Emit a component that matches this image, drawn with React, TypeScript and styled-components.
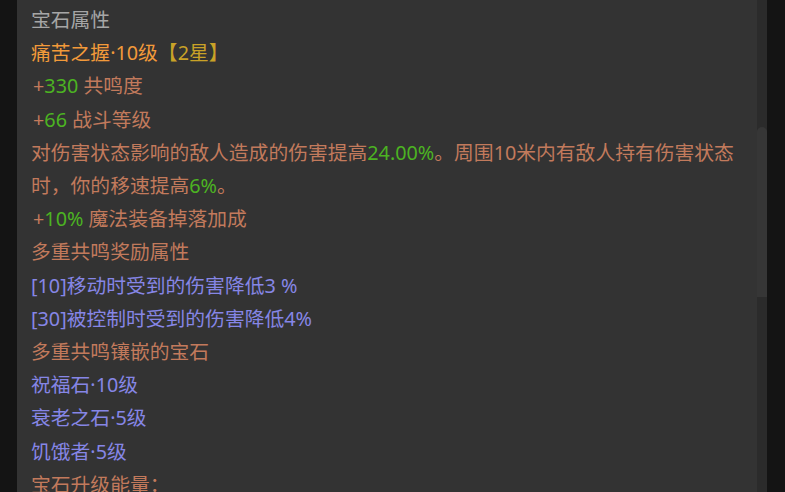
import styled, { createGlobalStyle } from "styled-components";

const GlobalStyle = createGlobalStyle`
  html, body {
    margin: 0;
    padding: 0;
    background: #141414;
    overflow: hidden;
  }
`;

const Page = styled.div`
  display: flex;
  width: 785px;
  height: 492px;
  background: #141414;
  overflow: hidden;
`;

const Gutter = styled.div<{ $w: number }>`
  flex: 0 0 ${(p) => p.$w}px;
  background: #141414;
`;

const Panel = styled.div`
  flex: 1 1 0%;
  background: #333333;
  padding: 3px 12px 0 14px;
  font-family: "Noto Sans", "Noto Sans CJK SC", sans-serif;
  font-size: 19.8px;
  line-height: 33.2px;
  overflow: hidden;
`;

const Track = styled.div`
  flex: 0 0 10px;
  background: #2b2b2b;
  padding-top: 127px;
  box-sizing: border-box;
`;

const Thumb = styled.div`
  height: 170px;
  background: #363636;
  border-radius: 5px 5px 0 0;
`;

type Tone = "gray" | "orange" | "gold" | "brown" | "green" | "blue";

const tones: Record<Tone, string> = {
  gray: "#a6a6a6",
  orange: "#f29a3a",
  gold: "#c9a227",
  brown: "#c27a5c",
  green: "#4cb322",
  blue: "#8686e6",
};

const Line = styled.div<{ $tone: Tone }>`
  color: ${(p) => tones[p.$tone]};
  white-space: normal;
`;

const Span = styled.span<{ $tone: Tone }>`
  color: ${(p) => tones[p.$tone]};
`;

const Plus = styled.span`
  padding-left: 2px;
`;

function Stat({ value, label }: { value: string; label: string }) {
  return (
    <Line $tone="brown">
      <Plus>+</Plus>
      <Span $tone="green">{value}</Span> {label}
    </Line>
  );
}

export default function App() {
  return (
    <>
      <GlobalStyle />
      <Page>
        <Gutter $w={17} />
        <Panel>
          <Line $tone="gray">宝石属性</Line>
          <Line $tone="orange">
            痛苦之握·10级<Span $tone="gold">【2星】</Span>
          </Line>
          <Stat value="330" label="共鸣度" />
          <Stat value="66" label="战斗等级" />
          <Line $tone="brown">
            对伤害状态影响的敌人造成的伤害提高<Span $tone="green">24.00%</Span>
            。周围10米内有敌人持有伤害状态时，你的移速提高
            <Span $tone="green">6%</Span>。
          </Line>
          <Stat value="10%" label="魔法装备掉落加成" />
          <Line $tone="brown">多重共鸣奖励属性</Line>
          <Line $tone="blue">[10]移动时受到的伤害降低3 %</Line>
          <Line $tone="blue">[30]被控制时受到的伤害降低4%</Line>
          <Line $tone="brown">多重共鸣镶嵌的宝石</Line>
          <Line $tone="blue">祝福石·10级</Line>
          <Line $tone="blue">衰老之石·5级</Line>
          <Line $tone="blue">饥饿者·5级</Line>
          <Line $tone="brown">宝石升级能量：</Line>
        </Panel>
        <Track>
          <Thumb />
        </Track>
        <Gutter $w={18} />
      </Page>
    </>
  );
}
